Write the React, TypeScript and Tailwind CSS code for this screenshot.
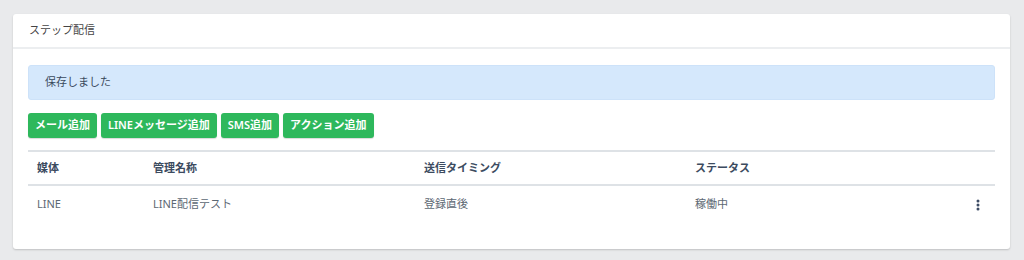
const buttons = ["メール追加", "LINEメッセージ追加", "SMS追加", "アクション追加"];

const rows = [{ media: "LINE", name: "LINE配信テスト", timing: "登録直後", status: "稼働中" }];

export default function App() {
  return (
    <main
      className="min-h-[260px] w-full bg-[#e9eaec] pt-[14px] pl-[13px] pr-[14px]"
      style={{ fontFamily: '"Noto Sans", "Noto Sans CJK JP", sans-serif' }}
    >
      <section className="rounded-[3px] bg-white shadow-[0_1px_2px_rgba(0,0,0,0.18)]">
        <header className="flex h-[35px] items-center border-b-2 border-[#eceef0] px-4 text-[11px] text-[#444]">
          ステップ配信
        </header>

        <div className="px-[15px] pt-[16px] pb-[27px]">
          <div className="flex h-[35px] items-center rounded-[3px] border border-[#cde2f9] bg-[#d5e8fc] px-4 text-[11px] text-[#3a4a5c]">
            保存しました
          </div>

          <div className="mt-[13px] flex gap-1">
            {buttons.map((b) => (
              <button
                key={b}
                className="h-[25px] rounded-[3px] bg-[#2eb85c] px-[7px] text-[11px] font-semibold text-white shadow-[0_1px_1px_rgba(0,0,0,0.15)]"
              >
                {b}
              </button>
            ))}
          </div>

          <table className="mt-[12px] w-full border-collapse text-left text-[11px]">
            <thead>
              <tr className="border-t-2 border-b-2 border-[#dee2e6] text-[#3c4b5f]">
                <th className="h-[34px] w-[116px] pl-[9px] font-bold">媒体</th>
                <th className="w-[271px] pl-[9px] font-bold">管理名称</th>
                <th className="w-[271px] pl-[9px] font-bold">送信タイミング</th>
                <th className="pl-[9px] font-bold">ステータス</th>
                <th className="w-[40px]"></th>
              </tr>
            </thead>
            <tbody>
              {rows.map((r) => (
                <tr key={r.name} className="text-[#5c6873]">
                  <td className="h-[37px] pl-[9px]">{r.media}</td>
                  <td className="pl-[9px]">{r.name}</td>
                  <td className="pl-[9px]">{r.timing}</td>
                  <td className="pl-[9px]">{r.status}</td>
                  <td className="pr-[15px] text-right">
                    <svg width="4" height="12" viewBox="0 0 4 12" className="ml-auto inline-block">
                      <circle cx="2" cy="2" r="1.5" fill="#3c4b64" />
                      <circle cx="2" cy="6" r="1.5" fill="#3c4b64" />
                      <circle cx="2" cy="10" r="1.5" fill="#3c4b64" />
                    </svg>
                  </td>
                </tr>
              ))}
            </tbody>
          </table>
        </div>
      </section>
    </main>
  );
}
